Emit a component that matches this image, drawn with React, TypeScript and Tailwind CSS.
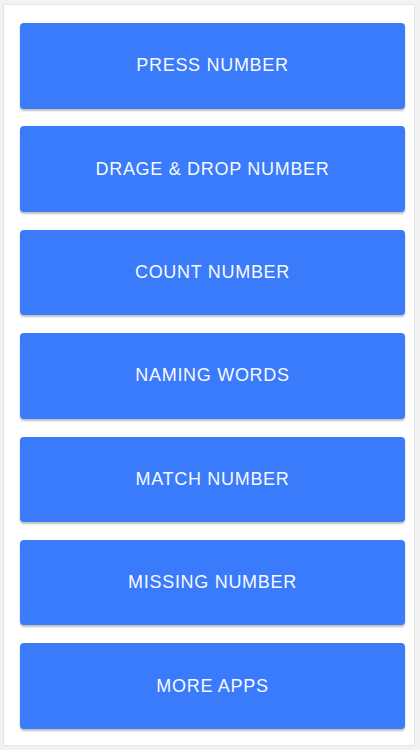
import React from "react";

const items = [
  "PRESS NUMBER",
  "DRAGE & DROP NUMBER",
  "COUNT NUMBER",
  "NAMING WORDS",
  "MATCH NUMBER",
  "MISSING NUMBER",
  "MORE APPS",
];

export default function App() {
  return (
    <div className="w-[420px] h-[750px] bg-[#f2f2f2] pt-[4px] pl-[3px] pr-[5px] pb-[4px]" style={{ fontFamily: "'Liberation Sans', Arial, sans-serif" }}>
      <div className="h-full bg-white border border-[#e6e6e6] pt-[18px] pl-[16px] pr-[9px] flex flex-col gap-[17.9px]">
        {items.map((t) => (
          <div
            key={t}
            className="h-[85.5px] shrink-0 rounded-[4px] bg-[#3a7bfb] flex items-center justify-center text-[#f7f9ff] text-[18px] tracking-[0.7px] shadow-[0_2px_2px_rgba(0,0,0,0.25)]"
          >
            {t}
          </div>
        ))}
      </div>
    </div>
  );
}
